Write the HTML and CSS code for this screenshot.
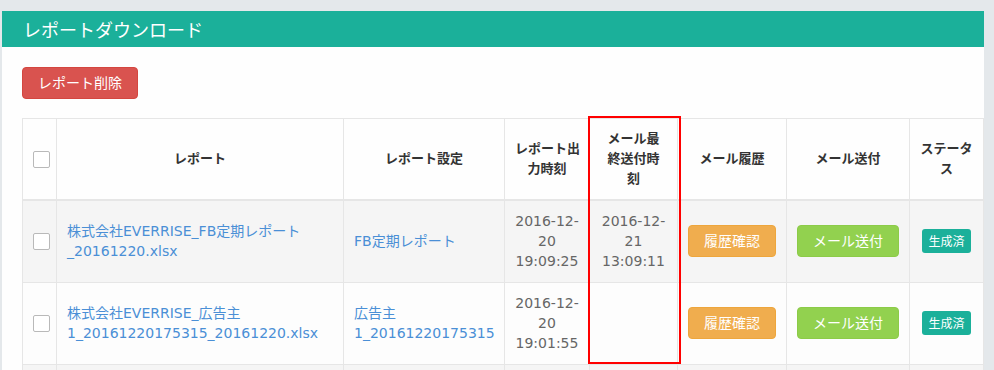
FILE: index.html
```html
<!DOCTYPE html>
<html lang="ja">
<head>
<meta charset="utf-8">
<title>レポートダウンロード</title>
<link rel="stylesheet" href="styles.css">
</head>
<body>
<div class="page">
  <section class="panel">
    <h1 class="panel-head">レポートダウンロード</h1>
    <div class="panel-body">
      <div class="toolbar">
        <button class="btn btn-danger" type="button">レポート削除</button>
      </div>
      <table class="report-table">
        <colgroup>
          <col class="c-check">
          <col class="c-report">
          <col class="c-setting">
          <col class="c-output">
          <col class="c-last">
          <col class="c-history">
          <col class="c-send">
          <col class="c-status">
        </colgroup>
        <thead>
          <tr>
            <th class="cell-check"><span class="check"></span></th>
            <th>レポート</th>
            <th>レポート設定</th>
            <th>レポート出<br>力時刻</th>
            <th>メール最<br>終送付時<br>刻</th>
            <th>メール履歴</th>
            <th>メール送付</th>
            <th>ステータ<br>ス</th>
          </tr>
        </thead>
        <tbody>
          <tr class="odd">
            <td class="cell-check"><span class="check"></span></td>
            <td class="cell-link"><a href="#">株式会社EVERRISE_FB定期レポート<br>_20161220.xlsx</a></td>
            <td class="cell-link"><a href="#">FB定期レポート</a></td>
            <td class="cell-date">2016-12-<br>20<br>19:09:25</td>
            <td class="cell-date">2016-12-<br>21<br>13:09:11</td>
            <td class="cell-center"><button class="btn btn-warning" type="button">履歴確認</button></td>
            <td class="cell-center"><button class="btn btn-success" type="button">メール送付</button></td>
            <td class="cell-center"><span class="label">生成済</span></td>
          </tr>
          <tr>
            <td class="cell-check"><span class="check"></span></td>
            <td class="cell-link"><a href="#">株式会社EVERRISE_広告主<br>1_20161220175315_20161220.xlsx</a></td>
            <td class="cell-link"><a href="#">広告主<br>1_20161220175315</a></td>
            <td class="cell-date">2016-12-<br>20<br>19:01:55</td>
            <td class="cell-date"></td>
            <td class="cell-center"><button class="btn btn-warning" type="button">履歴確認</button></td>
            <td class="cell-center"><button class="btn btn-success" type="button">メール送付</button></td>
            <td class="cell-center"><span class="label">生成済</span></td>
          </tr>
          <tr class="odd row-more">
            <td></td>
            <td></td>
            <td></td>
            <td></td>
            <td></td>
            <td></td>
            <td></td>
            <td></td>
          </tr>
        </tbody>
      </table>
    </div>
  </section>
  <div class="highlight"></div>
</div>
</body>
</html>
```

FILE: styles.css
```css
html, body {
  margin: 0;
  height: 100%;
  overflow: hidden;
}

body {
  background: #e4e8eb;
  font-family: "DejaVu Sans", "Noto Sans CJK JP", sans-serif;
  font-size: 14px;
  line-height: 20px;
  color: #333;
}

.page {
  position: relative;
  padding: 11px 0 0 2px;
}

.panel {
  width: 982px;
  background: #fefefe;
}

.panel-head {
  margin: 0;
  height: 36px;
  line-height: 36px;
  padding-left: 21px;
  background: #1bb09a;
  color: #fff;
  font-family: "Noto Sans CJK JP", sans-serif;
  font-size: 18px;
  font-weight: normal;
}

.panel-body {
  padding: 20px 0 40px 20px;
}

.toolbar {
  margin-bottom: 19px;
  line-height: 0;
}

.btn {
  display: inline-block;
  margin: 0;
  padding: 5px 15px;
  border: 1px solid transparent;
  border-radius: 4px;
  font-family: "DejaVu Sans", "Noto Sans CJK JP", sans-serif;
  font-size: 14px;
  line-height: 20px;
  color: #fff;
  cursor: pointer;
}

.btn-danger {
  background: #d9534f;
  border-color: #d4463f;
}

.btn-warning {
  background: #f0ad4e;
  border-color: #eea63c;
}

.btn-success {
  background: #92d14f;
  border-color: #8ccb48;
}

.report-table {
  width: 961px;
  table-layout: fixed;
  border-collapse: collapse;
}

.c-check { width: 34px; }
.c-report { width: 287px; }
.c-setting { width: 161px; }
.c-output { width: 85px; }
.c-last { width: 88px; }
.c-history { width: 109px; }
.c-send { width: 123px; }
.c-status { width: 74px; }

.report-table th,
.report-table td {
  border: 1px solid #e6e6e6;
  padding: 10px 10px 11px;
  vertical-align: middle;
}

.report-table th {
  background: #fefefe;
  border-bottom-width: 2px;
  padding: 10px;
  font-size: 13px;
  font-weight: bold;
  text-align: center;
  color: #333;
  white-space: nowrap;
}

.report-table tbody tr {
  background: #fdfdfd;
}

.report-table tbody tr.odd {
  background: #f5f5f5;
}

.report-table tr.row-more td {
  height: 60px;
}

.report-table .cell-check {
  padding-left: 10px;
  padding-right: 0;
  text-align: left;
}

.check {
  display: block;
  box-sizing: border-box;
  width: 17px;
  height: 17px;
  border: 1px solid #b9b9b9;
  border-radius: 2px;
  background: #fff;
}

.cell-link {
  white-space: nowrap;
  overflow: hidden;
}

.cell-link a {
  color: #4a8fd6;
  text-decoration: none;
}

.cell-date {
  text-align: center;
  color: #666;
  white-space: nowrap;
}

.cell-center {
  text-align: center;
  white-space: nowrap;
}

.label {
  display: inline-block;
  padding: 2px 6px;
  border-radius: 3px;
  background: #1bb09a;
  color: #fff;
  font-family: "Noto Sans CJK JP", sans-serif;
  font-size: 12px;
  line-height: 20px;
}

.highlight {
  position: absolute;
  left: 588px;
  top: 116px;
  width: 89px;
  height: 244px;
  border: 2px solid #f00;
  pointer-events: none;
}
```
